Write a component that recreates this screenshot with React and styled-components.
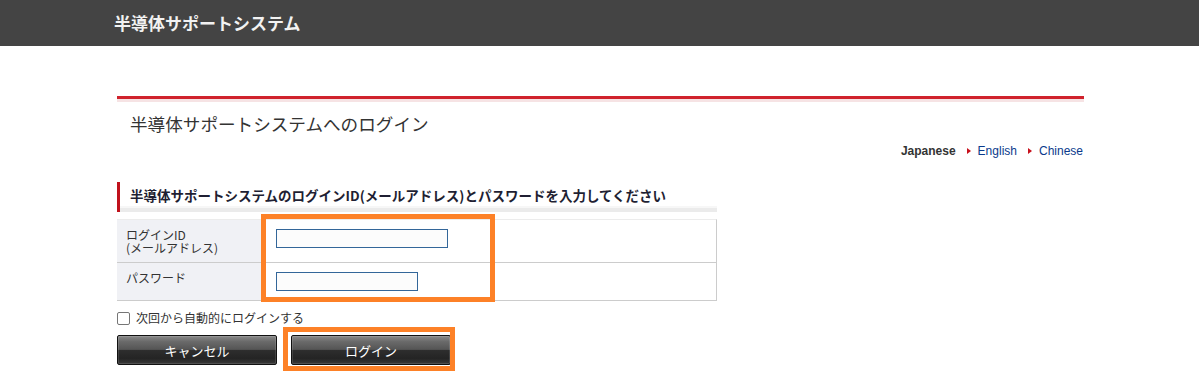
import React from 'react'
import styled, { createGlobalStyle } from 'styled-components'

const GlobalStyle = createGlobalStyle`
  html, body {
    margin: 0;
    padding: 0;
    background: #fff;
  }
  body {
    font-family: "Noto Sans CJK JP", "Liberation Sans", sans-serif;
    color: #333;
  }
`

const Header = styled.header`
  height: 46px;
  background: #444;
`

const HeaderInner = styled.div`
  width: 969px;
  margin: 0 auto;
  height: 100%;
  display: flex;
  align-items: center;
  padding-left: 0;
  box-sizing: border-box;
`

const SiteName = styled.h1`
  margin: 0 0 2px -1px;
  font-size: 17px;
  font-weight: bold;
  color: #f2f2f2;
  line-height: 1;
`

const Main = styled.main`
  width: 969px;
  margin: 0 auto;
  padding: 50px 0 24px 2px;
  box-sizing: border-box;
  position: relative;
`

const PageTitle = styled.h2`
  margin: 0;
  border-top: 3px solid #d0222c;
  box-shadow: inset 0 3px 0 #f6e3e4;
  padding: 13px 0 0 13px;
  height: 40px;
  box-sizing: border-box;
  font-size: 17.6px;
  font-weight: normal;
  line-height: 24px;
  color: #333;
`

const LangNav = styled.ul`
  list-style: none;
  margin: 8px 0 0;
  padding: 0 1px 0 0;
  display: flex;
  justify-content: flex-end;
  align-items: center;
  gap: 11px;
  font-size: 12px;
  line-height: 14px;
`

const LangItem = styled.li`
  display: flex;
  align-items: center;
  gap: 6px;
  color: ${p => (p.$current ? '#333' : '#0a3a8c')};
  font-weight: ${p => (p.$current ? 'bold' : 'normal')};
  font-family: "Liberation Sans", "Noto Sans CJK JP", sans-serif;
`

const Arrow = styled.span`
  width: 0;
  height: 0;
  border-top: 3px solid transparent;
  border-bottom: 3px solid transparent;
  border-left: 4px solid #c8101c;
  margin-right: 1px;
`

const FormBlock = styled.section`
  width: 600px;
  margin-top: 24px;
`

const SectionHeading = styled.h3`
  margin: 0;
  height: 30px;
  box-sizing: border-box;
  border-left: 3px solid #c0121c;
  padding: 3px 0 0 10px;
  font-size: 13.5px;
  font-weight: bold;
  line-height: 20px;
  color: #1f1f33;
  white-space: nowrap;
  background: linear-gradient(to bottom, #fff 0, #fff 24px, #f7f7f7 24px, #f7f7f7 26px, #ebebeb 26px, #ebebeb 30px);
`

const FormTable = styled.div`
  margin-top: 7px;
  border-top: 1px solid #ececec;
  border-right: 1px solid #ccc;
`

const Row = styled.div`
  display: grid;
  grid-template-columns: 146px 1fr;
  border-bottom: 1px solid #ccc;
`

const Label = styled.div`
  background: #f0f1f5;
  padding: 8px 9px 8px;
  font-size: 12px;
  line-height: 13px;
  color: #333;
`

const Field = styled.div`
  padding: 9px 13px;
`

const TextInput = styled.input`
  display: block;
  width: ${p => p.$w}px;
  height: 19px;
  box-sizing: border-box;
  border: 1px solid #336699;
  background: #fcfcfc;
  margin: 0;
  padding: 0 3px;
  outline: none;
`

const Remember = styled.label`
  display: flex;
  align-items: center;
  gap: 6px;
  margin-top: 10px;
  font-size: 12px;
  line-height: 14px;
  color: #333;
`

const CheckBox = styled.span`
  width: 13px;
  height: 13px;
  box-sizing: border-box;
  border: 1px solid #767676;
  border-radius: 2px;
  background: #fff;
`

const Buttons = styled.div`
  display: flex;
  gap: 14px;
  margin-top: 10px;
`

const DarkButton = styled.button`
  width: 160px;
  height: 30px;
  border: 1px solid #111;
  border-radius: 2px;
  padding: 0;
  color: #fff;
  font-family: "Noto Sans CJK JP", "Liberation Sans", sans-serif;
  font-size: 13px;
  cursor: pointer;
  background: linear-gradient(to bottom, #8a8a8a 0, #6a6a6a 20%, #555 48%, #2e2e2e 50%, #242424 80%, #3a3a3a 100%);
  box-shadow: inset 0 0 0 1px rgba(255, 255, 255, 0.12);
`

const Marker = styled.div`
  position: absolute;
  border: 5px solid #fd8127;
  box-sizing: border-box;
  pointer-events: none;
`

const App = () => {
  return (
    <>
      <GlobalStyle />
      <Header>
        <HeaderInner>
          <SiteName>半導体サポートシステム</SiteName>
        </HeaderInner>
      </Header>

      <Main>
        <PageTitle>半導体サポートシステムへのログイン</PageTitle>

        <LangNav>
          <LangItem $current>Japanese</LangItem>
          <LangItem><Arrow />English</LangItem>
          <LangItem><Arrow />Chinese</LangItem>
        </LangNav>

        <FormBlock>
          <SectionHeading>半導体サポートシステムのログインID(メールアドレス)とパスワードを入力してください</SectionHeading>

          <FormTable>
            <Row>
              <Label>ログインID<br />(メールアドレス)</Label>
              <Field><TextInput type="text" $w={172} /></Field>
            </Row>
            <Row>
              <Label>パスワード</Label>
              <Field><TextInput type="password" $w={142} /></Field>
            </Row>
          </FormTable>

          <Remember>
            <CheckBox />
            次回から自動的にログインする
          </Remember>

          <Buttons>
            <DarkButton>キャンセル</DarkButton>
            <DarkButton>ログイン</DarkButton>
          </Buttons>
        </FormBlock>

        {/* annotation boxes over the form */}
        <Marker style={{ left: 146, top: 168, width: 234, height: 88 }} />
        <Marker style={{ left: 168, top: 281, width: 172, height: 44 }} />
      </Main>
    </>
  )
}

export default App
